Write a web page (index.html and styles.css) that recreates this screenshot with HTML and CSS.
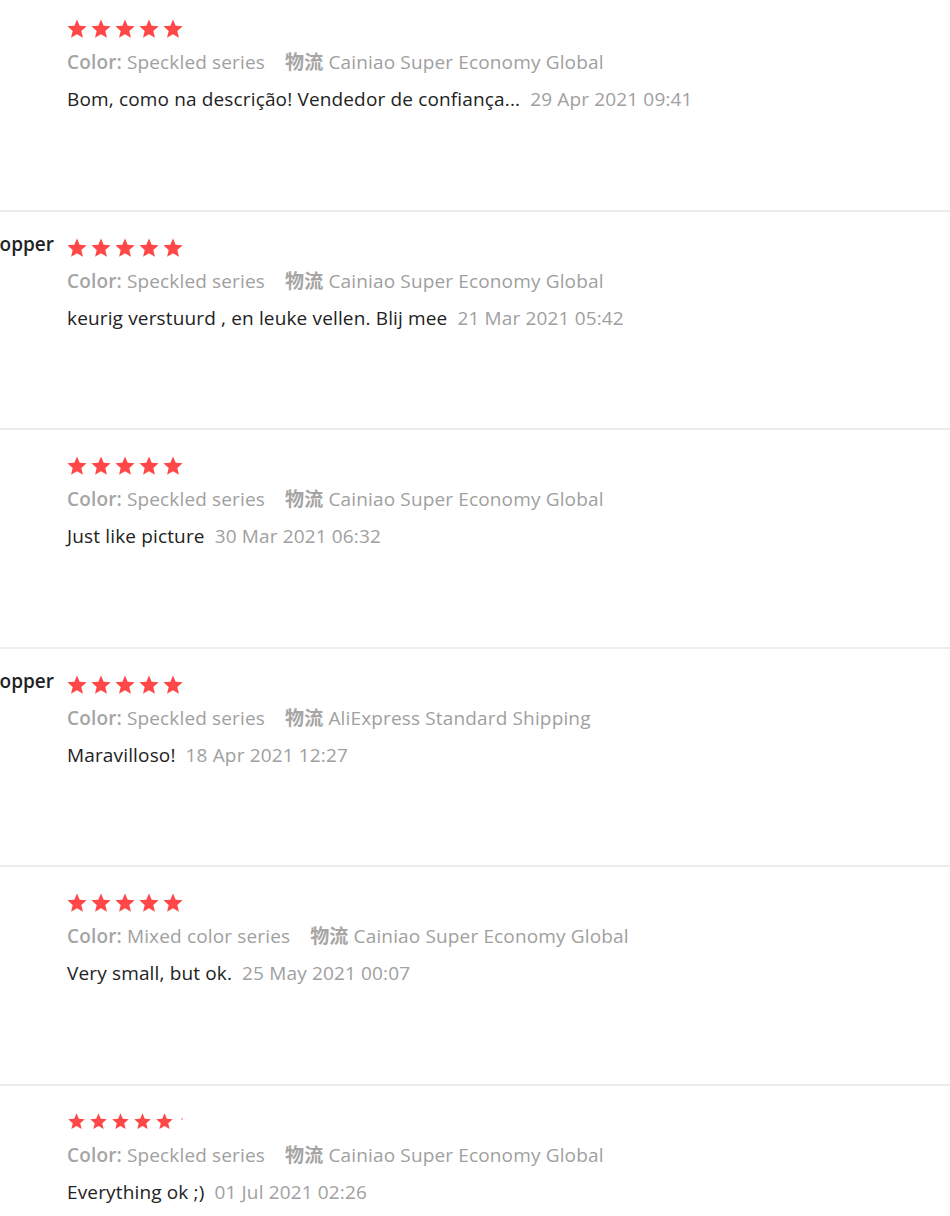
FILE: index.html
```html
<!DOCTYPE html>
<html>
<head>
<meta charset="utf-8">
<link rel="stylesheet" href="styles.css">
</head>
<body>
<svg width="0" height="0" class="defs">
  <defs>
    <symbol id="star" viewBox="0 0 24 24">
      <polygon points="12,1.5 14.9,8.4 22.5,9.1 16.7,14.1 18.5,21.6 12,17.6 5.5,21.6 7.3,14.1 1.5,9.1 9.1,8.4" fill="#ff4747"/>
    </symbol>
  </defs>
</svg>
<div class="list">
  <div class="review">
    <div class="user"><span class="name"></span></div>
    <div class="content">
      <div class="stars">
        <svg class="star"><use href="#star"/></svg><svg class="star"><use href="#star"/></svg><svg class="star"><use href="#star"/></svg><svg class="star"><use href="#star"/></svg><svg class="star"><use href="#star"/></svg>
      </div>
      <div class="meta"><span class="prop"><b>Color:</b> Speckled series</span><span class="prop"><b>物流</b> Cainiao Super Economy Global</span></div>
      <div class="comment"><span class="text">Bom, como na descrição! Vendedor de confiança...</span><span class="date">29 Apr 2021 09:41</span></div>
    </div>
  </div>
  <div class="review">
    <div class="user"><span class="name">opper</span></div>
    <div class="content">
      <div class="stars">
        <svg class="star"><use href="#star"/></svg><svg class="star"><use href="#star"/></svg><svg class="star"><use href="#star"/></svg><svg class="star"><use href="#star"/></svg><svg class="star"><use href="#star"/></svg>
      </div>
      <div class="meta"><span class="prop"><b>Color:</b> Speckled series</span><span class="prop"><b>物流</b> Cainiao Super Economy Global</span></div>
      <div class="comment"><span class="text">keurig verstuurd , en leuke vellen. Blij mee</span><span class="date">21 Mar 2021 05:42</span></div>
    </div>
  </div>
  <div class="review">
    <div class="user"><span class="name"></span></div>
    <div class="content">
      <div class="stars">
        <svg class="star"><use href="#star"/></svg><svg class="star"><use href="#star"/></svg><svg class="star"><use href="#star"/></svg><svg class="star"><use href="#star"/></svg><svg class="star"><use href="#star"/></svg>
      </div>
      <div class="meta"><span class="prop"><b>Color:</b> Speckled series</span><span class="prop"><b>物流</b> Cainiao Super Economy Global</span></div>
      <div class="comment"><span class="text">Just like picture</span><span class="date">30 Mar 2021 06:32</span></div>
    </div>
  </div>
  <div class="review">
    <div class="user"><span class="name">opper</span></div>
    <div class="content">
      <div class="stars">
        <svg class="star"><use href="#star"/></svg><svg class="star"><use href="#star"/></svg><svg class="star"><use href="#star"/></svg><svg class="star"><use href="#star"/></svg><svg class="star"><use href="#star"/></svg>
      </div>
      <div class="meta"><span class="prop"><b>Color:</b> Speckled series</span><span class="prop"><b>物流</b> AliExpress Standard Shipping</span></div>
      <div class="comment"><span class="text">Maravilloso!</span><span class="date">18 Apr 2021 12:27</span></div>
    </div>
  </div>
  <div class="review">
    <div class="user"><span class="name"></span></div>
    <div class="content">
      <div class="stars">
        <svg class="star"><use href="#star"/></svg><svg class="star"><use href="#star"/></svg><svg class="star"><use href="#star"/></svg><svg class="star"><use href="#star"/></svg><svg class="star"><use href="#star"/></svg>
      </div>
      <div class="meta"><span class="prop"><b>Color:</b> Mixed color series</span><span class="prop"><b>物流</b> Cainiao Super Economy Global</span></div>
      <div class="comment"><span class="text">Very small, but ok.</span><span class="date">25 May 2021 00:07</span></div>
    </div>
  </div>
  <div class="review">
    <div class="user"><span class="name"></span></div>
    <div class="content">
      <div class="stars small">
        <svg class="star"><use href="#star"/></svg><svg class="star"><use href="#star"/></svg><svg class="star"><use href="#star"/></svg><svg class="star"><use href="#star"/></svg><svg class="star"><use href="#star"/></svg><span class="dot"></span>
      </div>
      <div class="meta"><span class="prop"><b>Color:</b> Speckled series</span><span class="prop"><b>物流</b> Cainiao Super Economy Global</span></div>
      <div class="comment"><span class="text">Everything ok ;)</span><span class="date">01 Jul 2021 02:26</span></div>
    </div>
  </div>
</div>
</body>
</html>
```
FILE: styles.css
```css
html, body {
  margin: 0;
  padding: 0;
  background: #fff;
}
body {
  font-family: "Open Sans", "Noto Sans CJK SC", sans-serif;
  font-size: 19px;
  letter-spacing: 0.15px;
  overflow: hidden;
  height: 1216px;
}
.defs {
  position: absolute;
  width: 0;
  height: 0;
}
.list {
  margin-top: -7px;
}
.review {
  display: flex;
  gap: 13px;
  height: 218.5px;
  box-sizing: border-box;
  padding-top: 25px;
  border-bottom: 2px solid #ececec;
}
.user {
  width: 54px;
  flex: none;
  display: flex;
  justify-content: flex-end;
  white-space: nowrap;
}
.name {
  color: #222;
  font-weight: 600;
  font-size: 19px;
  letter-spacing: 0;
  line-height: 20px;
  margin-top: -3px;
}
.content {
  display: flex;
  flex-direction: column;
}
.stars {
  display: flex;
  gap: 2px;
  height: 22px;
  align-items: center;
  margin-left: -1px;
}
.star {
  width: 22px;
  height: 22px;
  flex: none;
}
.stars.small {
  gap: 3px;
  margin-left: 0;
}
.stars.small .star {
  width: 19px;
  height: 19px;
}
.dot {
  width: 2px;
  height: 2px;
  border-radius: 1px;
  background: #ff9a9a;
  margin-top: -6px;
  margin-left: 4px;
}
.meta {
  margin-top: 10px;
  display: flex;
  gap: 20px;
  color: #a0a0a0;
  line-height: 24px;
  white-space: nowrap;
}
.meta b {
  font-weight: 600;
  color: #a5a5a5;
}
.comment {
  margin-top: 13px;
  display: flex;
  gap: 10px;
  line-height: 24px;
  white-space: nowrap;
}
.text {
  color: #222;
}
.date {
  color: #a0a0a0;
}
```
